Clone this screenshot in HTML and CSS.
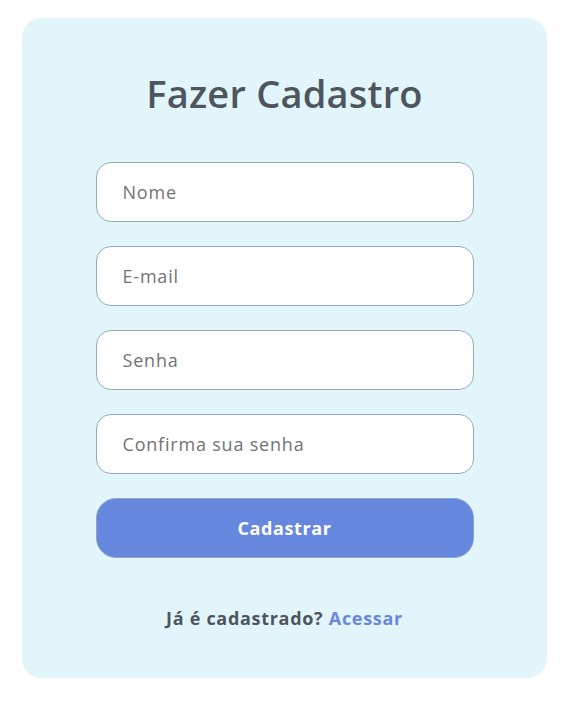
FILE: index.html
```html
<!DOCTYPE html>
<html lang="pt-BR">
<head>
<meta charset="utf-8">
<title>Fazer Cadastro</title>
<link rel="stylesheet" href="styles.css">
</head>
<body>
<main class="card">
  <h1 class="title">Fazer Cadastro</h1>
  <form class="form">
    <input class="field" type="text" placeholder="Nome">
    <input class="field" type="email" placeholder="E-mail">
    <input class="field" type="password" placeholder="Senha">
    <input class="field" type="password" placeholder="Confirma sua senha">
    <button class="submit" type="button">Cadastrar</button>
  </form>
  <p class="footer">Já é cadastrado? <a class="link" href="#">Acessar</a></p>
</main>
</body>
</html>
```
FILE: styles.css
```css
* { box-sizing: border-box; }
html, body { margin: 0; padding: 0; background: #ffffff; }
body {
  font-family: "Open Sans", "Liberation Sans", sans-serif;
  padding: 18px 0 0 22px;
}
.card {
  width: 525px;
  height: 660px;
  background: #e1f5fb;
  border-radius: 20px;
  display: flex;
  flex-direction: column;
  align-items: center;
  padding-top: 53px;
}
.title {
  margin: 0;
  font-size: 38px;
  line-height: 44px;
  font-weight: 600;
  color: #4f555d;
  letter-spacing: 0.2px;
}
.form {
  margin-top: 47px;
  display: flex;
  flex-direction: column;
  gap: 24px;
  width: 378px;
}
.field {
  width: 100%;
  height: 60px;
  border: 1px solid #94a9bf;
  border-radius: 15px;
  background: #ffffff;
  padding: 0 0 0 26px;
  font-family: inherit;
  font-size: 18px;
  letter-spacing: 0.8px;
  color: #555;
  outline: none;
}
.field::placeholder { color: #737373; }
.submit {
  height: 60px;
  border: 1px solid #8fa6c8;
  border-radius: 20px;
  background: #6687de;
  color: #ffffff;
  font-family: inherit;
  font-size: 18px;
  letter-spacing: 0.6px;
  font-weight: 700;
}
.footer {
  margin: 48px 0 0;
  font-size: 18px;
  letter-spacing: 0.7px;
  font-weight: 700;
  color: #4f555d;
}
.link { color: #6b87dd; text-decoration: none; }
```
